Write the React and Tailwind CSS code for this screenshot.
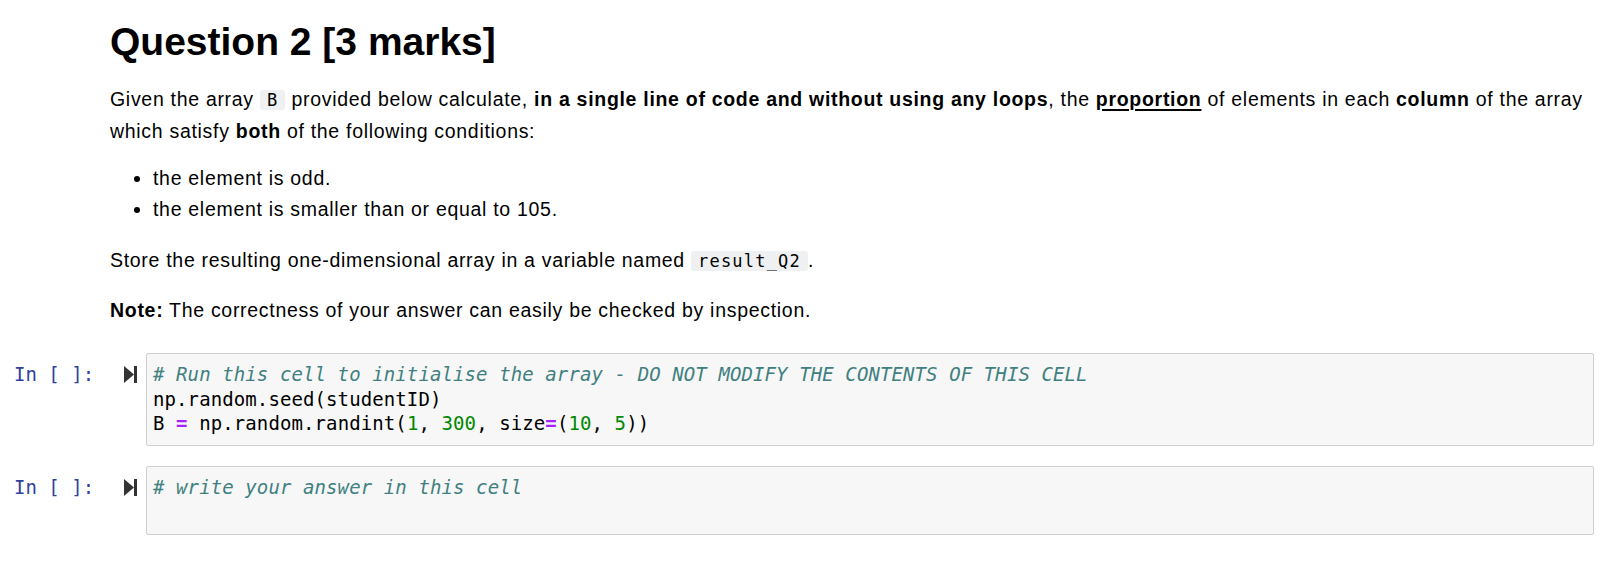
import React from 'react'

const SANS = { fontFamily: '"Liberation Sans", Arial, sans-serif' }
const MONO = { fontFamily: '"DejaVu Sans Mono", "Liberation Mono", monospace' }

function InlineCode({ children }) {
  return (
    <code
      style={MONO}
      className="bg-[#eff0f1] rounded-[3px] px-[7px] text-[17px] tracking-[1.2px] text-black"
    >
      {children}
    </code>
  )
}

function RunIcon() {
  return (
    <svg width="13" height="17" viewBox="0 0 13 17" className="shrink-0">
      <polygon points="0,0 10,8.5 0,17" fill="#333" />
      <rect x="10" y="0" width="3" height="17" fill="#333" />
    </svg>
  )
}

const C = ({ children }) => <span className="italic text-[#408080]">{children}</span>
const N = ({ children }) => <span className="text-[#008800]">{children}</span>
const O = ({ children }) => <span className="font-bold text-[#AA22FF]">{children}</span>

function CodeCell({ lines, className = '' }) {
  return (
    <div className={`flex ${className}`}>
      <div style={MONO} className="w-[124px] shrink-0 pl-[14px] pt-[9px] text-[19px] leading-[24.5px] text-[#303F9F] whitespace-pre">
        In [ ]:
      </div>
      <div className="w-[22px] shrink-0 pt-[13px]">
        <RunIcon />
      </div>
      <div
        style={MONO}
        className="flex-1 mr-[10px] border border-[#cfcfcf] rounded-[2px] bg-[#f7f7f7] pl-[6px] pt-[8px] pb-[9.5px] text-[19px] tracking-[0.1px] leading-[24.5px] text-black whitespace-pre"
      >
        {lines.map((l, i) => (
          <div key={i} className="h-[24.5px]">{l}</div>
        ))}
      </div>
    </div>
  )
}

export default function App() {
  return (
    <div className="w-full min-h-screen bg-white text-black pt-[19px]" style={SANS}>
      <div className="pl-[110px] pr-[10px]">
        <h1 className="text-[39px] font-bold leading-[46px] h-[46px]">Question 2 [3 marks]</h1>

        <p className="mt-[19px] text-[19.5px] leading-[30.7px] tracking-[0.7px]">
          Given the array <InlineCode>B</InlineCode> provided below calculate,{' '}
          <b>in a single line of code and without using any loops</b>, the{' '}
          <b className="underline decoration-2 underline-offset-[3px]">proportion</b> of elements in each{' '}
          <b>column</b> of the array which satisfy <b>both</b> of the following conditions:
        </p>

        <ul className="mt-[17px] list-disc pl-[43px] text-[19.5px] leading-[30.7px] tracking-[0.7px]">
          <li>the element is odd.</li>
          <li>the element is smaller than or equal to 105.</li>
        </ul>

        <p className="mt-[20px] text-[19.5px] leading-[30.7px] tracking-[0.7px]">
          Store the resulting one-dimensional array in a variable named <InlineCode>result_Q2</InlineCode>.
        </p>

        <p className="mt-[18px] text-[19.5px] leading-[30.7px] tracking-[0.7px]">
          <b>Note:</b> The correctness of your answer can easily be checked by inspection.
        </p>
      </div>

      <CodeCell
        className="mt-[28px]"
        lines={[
          <C># Run this cell to initialise the array - DO NOT MODIFY THE CONTENTS OF THIS CELL</C>,
          <>np.random.seed(studentID)</>,
          <>B <O>=</O> np.random.randint(<N>1</N>, <N>300</N>, size<O>=</O>(<N>10</N>, <N>5</N>))</>,
        ]}
      />

      <CodeCell
        className="mt-[20px]"
        lines={[<C># write your answer in this cell</C>, <>{' '}</>]}
      />
    </div>
  )
}
